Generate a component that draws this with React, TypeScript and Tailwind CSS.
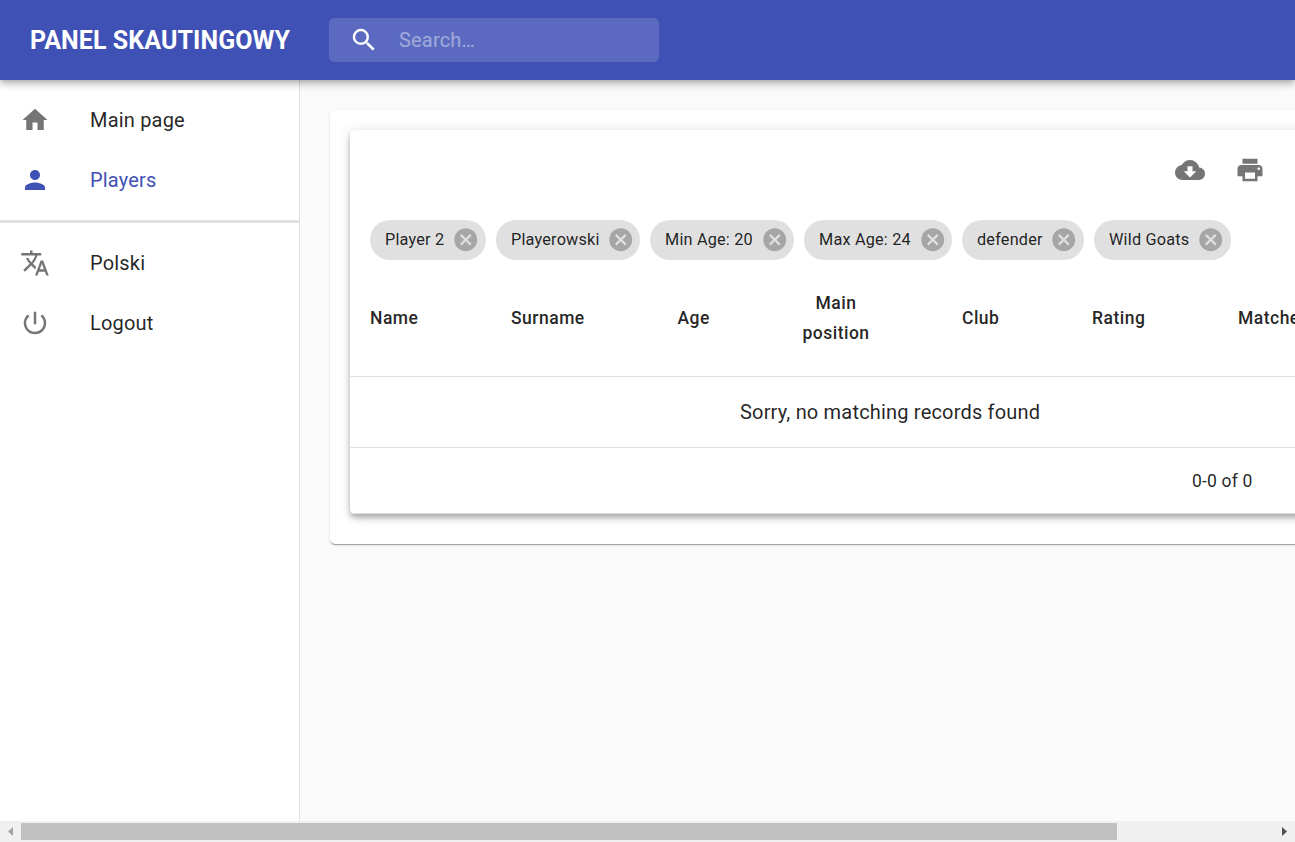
import React from "react";
import {
  MdCancel,
  MdCloudDownload,
  MdHome,
  MdPerson,
  MdPowerSettingsNew,
  MdPrint,
  MdSearch,
  MdTranslate,
} from "react-icons/md";
import type { IconType } from "react-icons";

type NavItemProps = { icon: IconType; label: string; active?: boolean };

function NavItem({ icon: Icon, label, active = false }: NavItemProps) {
  return (
    <a className={`flex h-[60px] items-center pl-5 ${active ? "text-[#3f51b5]" : "text-black/87"}`}>
      <Icon className={`size-[30px] shrink-0 ${active ? "text-[#3f51b5]" : "text-black/54"}`} />
      <span className="ml-10 text-xl leading-[30px] tracking-[0.00938em]">{label}</span>
    </a>
  );
}

const filters = [
  { label: "Player 2", size: "w-[116px] pr-[7px]" },
  { label: "Playerowski", size: "w-36 pr-[6px]" },
  { label: "Min Age: 20", size: "w-36 pr-[6px]" },
  { label: "Max Age: 24", size: "w-[148px] pr-[6px]" },
  { label: "defender", size: "w-[122px] pr-[7px]" },
  { label: "Wild Goats", size: "w-[137px] pr-[7px]" },
];

const columns = [
  { label: "Name", width: "w-[141px]" },
  { label: "Surname", width: "w-[166.5px]" },
  { label: "Age", width: "w-[124.5px]" },
  { label: "Main position", width: "w-[160px]" },
  { label: "Club", width: "w-[130px]" },
  { label: "Rating", width: "w-[146px]" },
  { label: "Matches", width: "w-[160px]" },
];

function Header() {
  return (
    <header className="relative z-10 flex h-20 shrink-0 items-center bg-[#3f51b5] pl-[30px] text-white shadow-[0_2.5px_5px_-1.25px_rgba(0,0,0,0.2),0_5px_6.25px_0_rgba(0,0,0,0.14),0_1.25px_12.5px_0_rgba(0,0,0,0.12)]">
      <h1 className="w-[299px] whitespace-nowrap pt-0.5 text-[25px] font-bold leading-10 tracking-[0.08px]">PANEL SKAUTINGOWY</h1>
      <div className="flex h-11 w-[330px] items-center rounded-[5px] bg-white/15 pl-5">
        <MdSearch className="size-[30px]" />
        <span className="ml-5 text-xl tracking-[0.00938em] text-white/42">Search…</span>
      </div>
    </header>
  );
}

function Sidebar() {
  return (
    <nav className="w-[300px] shrink-0 border-r border-black/12 bg-white pt-2.5">
      <NavItem icon={MdHome} label="Main page" />
      <NavItem icon={MdPerson} label="Players" active />
      <hr className="mt-2.5 mb-2.5 h-[3px] border-0 bg-[#e0e0e0]" />
      <NavItem icon={MdTranslate} label="Polski" />
      <NavItem icon={MdPowerSettingsNew} label="Logout" />
    </nav>
  );
}

function PlayersTable() {
  return (
    <section className="flex h-[384px] w-[1140px] flex-col rounded-[5px] bg-white shadow-[0_2.5px_5px_-1.25px_rgba(0,0,0,0.2),0_5px_6.25px_0_rgba(0,0,0,0.14),0_1.25px_12.5px_0_rgba(0,0,0,0.12)]">
      <div className="flex h-20 items-center gap-[30px] pl-[825px] text-black/54">
        <MdCloudDownload className="size-[30px]" />
        <MdPrint className="size-[30px]" />
      </div>
      <div className="mt-2.5 flex gap-2.5 px-5">
        {filters.map((f) => (
          <div key={f.label} className={`flex h-10 items-center justify-between rounded-full bg-[#e0e0e0] pl-[15px] ${f.size}`}>
            <span className="whitespace-nowrap text-[16.25px] leading-10 tracking-[0.012em] text-black/87">{f.label}</span>
            <MdCancel className="size-[27.5px] shrink-0 text-black/26" />
          </div>
        ))}
      </div>
      <div className="flex h-[117px] items-center border-b border-[#e0e0e0] pl-5">
        {columns.map((c) => (
          <div key={c.label} className={`shrink-0 text-[17.5px] font-medium leading-[30px] tracking-[0.028em] text-black/87 ${c.width}`}>
            {c.label === "Main position" ? <span className="block w-[68px] text-center">Main position</span> : c.label}
          </div>
        ))}
      </div>
      <div className="flex h-[71px] items-center border-b border-[#e0e0e0] pl-[390px] text-xl tracking-[0.00938em] text-black/87">
        Sorry, no matching records found
      </div>
      <div className="flex flex-1 items-center border-b border-[#e0e0e0] pl-[842px] pt-0.5 text-[17.5px] tracking-[0.01071em] text-black/87">
        0-0 of 0
      </div>
    </section>
  );
}

function Scrollbar() {
  return (
    <div className="flex h-[21px] shrink-0 items-center bg-[#f0f0f0]">
      <svg className="h-[21px] w-[21px]" viewBox="0 0 21 21" fill="#a3a3a3">
        <path d="M13 6v9l-5-4.5z" />
      </svg>
      <div className="h-[17px] w-[1096px] bg-[#c1c1c1]" />
      <svg className="ml-auto h-[21px] w-[21px]" viewBox="0 0 21 21" fill="#505050">
        <path d="M8 6v9l5-4.5z" />
      </svg>
    </div>
  );
}

export default function App() {
  return (
    <div className="flex h-[842px] w-full flex-col overflow-hidden bg-[#fafafa] font-['Roboto',sans-serif]">
      <Header />
      <div className="flex min-h-0 flex-1">
        <Sidebar />
        <main className="min-w-0 flex-1 overflow-hidden p-[30px]">
          <div className="h-[434px] w-[1180px] rounded-[5px] bg-white p-5 shadow-[0_2px_1px_-1px_rgba(0,0,0,0.2),0_1px_1px_0_rgba(0,0,0,0.14),0_1px_3px_0_rgba(0,0,0,0.12)]">
            <PlayersTable />
          </div>
        </main>
      </div>
      <Scrollbar />
    </div>
  );
}
